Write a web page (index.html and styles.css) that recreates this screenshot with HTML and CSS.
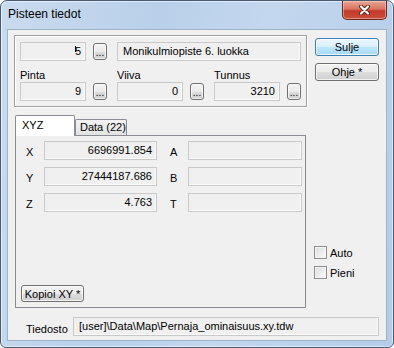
FILE: index.html
```html
<!DOCTYPE html>
<html lang="fi">
<head>
    <meta charset="UTF-8">
    <title>Pisteen tiedot</title>
    <link rel="stylesheet" href="styles.css">
</head>
<body>
<div class="window">
    <div class="titlebar">
        <span class="title">Pisteen tiedot</span>
        <div class="close-btn">
            <svg width="11" height="10" viewBox="0 0 11 10">
                <path d="M2 1.5 L9 8.5 M9 1.5 L2 8.5" stroke="#5b2119" stroke-width="4" stroke-linecap="round"/>
                <path d="M2 1.5 L9 8.5 M9 1.5 L2 8.5" stroke="#fff" stroke-width="2.2" stroke-linecap="round"/>
            </svg>
        </div>
    </div>

    <div class="client">
        <div class="main">
            <div class="left">
                <div class="groupbox">
                    <div class="row-top">
                        <div class="edit num short"><span class="caret"></span>5</div>
                        <button class="dots">...</button>
                        <div class="edit name">Monikulmiopiste 6. luokka</div>
                    </div>
                    <div class="row-fields">
                        <div class="field">
                            <div class="label">Pinta</div>
                            <div class="pair">
                                <div class="edit num short">9</div>
                                <button class="dots">...</button>
                            </div>
                        </div>
                        <div class="field">
                            <div class="label">Viiva</div>
                            <div class="pair">
                                <div class="edit num short">0</div>
                                <button class="dots">...</button>
                            </div>
                        </div>
                        <div class="field">
                            <div class="label">Tunnus</div>
                            <div class="pair">
                                <div class="edit num short">3210</div>
                                <button class="dots">...</button>
                            </div>
                        </div>
                    </div>
                </div>

                <div class="tabs">
                    <div class="tab-strip">
                        <div class="tab active">XYZ</div>
                        <div class="tab">Data (22)</div>
                    </div>
                    <div class="tab-panel">
                        <div class="coord-grid">
                            <div class="clabel">X</div>
                            <div class="edit num">6696991.854</div>
                            <div class="clabel">A</div>
                            <div class="edit"></div>

                            <div class="clabel">Y</div>
                            <div class="edit num">27444187.686</div>
                            <div class="clabel">B</div>
                            <div class="edit"></div>

                            <div class="clabel">Z</div>
                            <div class="edit num">4.763</div>
                            <div class="clabel">T</div>
                            <div class="edit"></div>
                        </div>
                        <button class="btn copy">Kopioi XY *</button>
                    </div>
                </div>
            </div>

            <div class="right">
                <button class="btn default">Sulje</button>
                <button class="btn">Ohje *</button>
                <div class="checks">
                    <label class="check"><span class="box"></span>Auto</label>
                    <label class="check"><span class="box"></span>Pieni</label>
                </div>
            </div>
        </div>

        <div class="file-row">
            <span class="file-label">Tiedosto</span>
            <div class="edit file">[user]\Data\Map\Pernaja_ominaisuus.xy.tdw</div>
        </div>
    </div>
</div>
</body>
</html>
```

FILE: styles.css
```css
* {
    box-sizing: border-box;
}
body {
    margin: 0;
    background: #fff;
    font-family: "Liberation Sans", Arial, sans-serif;
    font-size: 11px;
    color: #000;
}
.window {
    width: 394px;
    height: 348px;
    border: 1px solid #4a5a70;
    border-radius: 7px 7px 6px 6px;
    background: linear-gradient(100deg, #c9dbef 0%, #b9d0ea 35%, #c3d7ee 60%, #b4cce8 100%);
    box-shadow: inset 0 0 0 1px rgba(255,255,255,0.55);
    display: flex;
    flex-direction: column;
    overflow: hidden;
}
.titlebar {
    height: 28px;
    display: flex;
    justify-content: space-between;
    align-items: flex-start;
    padding-left: 7px;
    padding-right: 6px;
}
.title {
    font-size: 12px;
    line-height: 14px;
    margin-top: 6px;
}
.close-btn {
    width: 45px;
    height: 19px;
    border: 1px solid #6e2a22;
    border-top: none;
    border-radius: 0 0 5px 5px;
    background: linear-gradient(#e9a796 0%, #d8745f 45%, #c4392a 55%, #c8503a 100%);
    box-shadow: inset 0 0 0 1px rgba(255,220,210,0.45);
    display: flex;
    justify-content: center;
    align-items: center;
}
.client {
    flex: 1;
    margin: 0 6px 6px;
    border: 1px solid #9fb2c8;
    background: #f0f0f0;
    padding: 5px 7px 0 6px;
    display: flex;
    flex-direction: column;
}
.main {
    display: flex;
    gap: 8px;
    height: 273px;
}
.left {
    width: 293px;
    display: flex;
    flex-direction: column;
}
.groupbox {
    height: 72px;
    border: 1px solid #a0a0a0;
    box-shadow: inset 1px 1px 0 #fff, 1px 1px 0 #fff;
    padding: 6px 5px 0 5px;
    margin-bottom: 8px;
}
.row-top {
    display: flex;
    align-items: center;
    height: 19px;
}
.edit {
    height: 19px;
    border: 1px solid #c9c9c9;
    box-shadow: inset -1px -1px 0 #fbfbfb;
    background: #f0f0f0;
    line-height: 17px;
    padding: 0 4px;
    white-space: nowrap;
    overflow: hidden;
}
.edit.num {
    text-align: right;
}
.edit.short {
    width: 66px;
}
.edit.name {
    width: 184px;
    margin-left: 10px;
    padding-left: 5px;
}
.caret {
    display: inline-block;
    width: 1px;
    height: 6px;
    background: #000;
    vertical-align: 3px;
    margin-right: -1px;
}
.dots {
    width: 14px;
    height: 17px;
    margin-left: 7px;
    padding: 0;
    font-family: inherit;
    font-size: 10px;
    line-height: 17px;
    border: 1px solid #707070;
    border-radius: 3px;
    background: linear-gradient(#f2f2f2 0%, #ebebeb 50%, #dddddd 51%, #cfcfcf 100%);
    box-shadow: inset 0 0 0 1px rgba(255,255,255,0.7);
    color: #000;
}
.row-fields {
    margin-top: 8px;
    display: grid;
    grid-template-columns: 87px 87px 87px;
    column-gap: 10px;
}
.label {
    height: 13px;
    line-height: 13px;
}
.pair {
    display: flex;
    align-items: center;
}
.tabs {
    flex: 1;
    display: flex;
    flex-direction: column;
    padding: 0 1px;
}
.tab-strip {
    display: flex;
    align-items: flex-end;
    height: 20px;
}
.tab {
    height: 16px;
    width: 52px;
    border: 1px solid #898c95;
    border-bottom: none;
    border-radius: 2px 2px 0 0;
    background: linear-gradient(#f2f2f2, #e3e3e3);
    padding-left: 4px;
    line-height: 15px;
}
.tab.active {
    width: 60px;
    height: 21px;
    margin-bottom: -1px;
    background: #fff;
    padding-left: 6px;
    line-height: 19px;
    position: relative;
    z-index: 1;
}
.tab-panel {
    flex: 1;
    border: 1px solid #898c95;
    background: #f0f0f0;
    padding: 5px 3px 5px 10px;
    display: flex;
    flex-direction: column;
}
.coord-grid {
    display: grid;
    grid-template-columns: 18px 113px 18px 114px;
    column-gap: 0;
    row-gap: 7px;
}
.coord-grid .clabel:nth-child(4n+3) {
    margin-left: 13px;
    width: 18px;
}
.coord-grid {
    grid-template-columns: 18px 113px 31px 114px;
}
.clabel {
    line-height: 13px;
    padding-top: 5px;
}
.btn {
    height: 18px;
    padding: 0;
    font-family: inherit;
    font-size: 11px;
    color: #000;
    border: 1px solid #707070;
    border-radius: 3px;
    background: linear-gradient(#f2f2f2 0%, #ebebeb 50%, #dddddd 51%, #cfcfcf 100%);
    box-shadow: inset 0 0 0 1px rgba(255,255,255,0.75);
}
.btn.default {
    border-color: #3c7fb1;
    background: linear-gradient(#eaf6fd 0%, #d9f0fc 50%, #bee6fd 51%, #a7d9f5 100%);
}
.btn.copy {
    width: 63px;
    height: 17px;
    margin-top: auto;
    margin-left: -5px;
    align-self: flex-start;
}
.right {
    width: 64px;
    display: flex;
    flex-direction: column;
    padding-top: 3px;
}
.right .btn + .btn {
    margin-top: 7px;
}
.checks {
    margin-top: auto;
    margin-bottom: 29px;
    display: flex;
    flex-direction: column;
    gap: 7px;
}
.check {
    display: flex;
    align-items: center;
    height: 13px;
    margin-left: -1px;
}
.box {
    width: 13px;
    height: 13px;
    border: 1px solid #8e8f8f;
    background: linear-gradient(135deg, #dcdcdc, #fbfbfb);
    box-shadow: inset 0 0 0 1px #f4f4f4;
    margin-right: 3px;
}
.file-row {
    margin-top: 9px;
    display: flex;
    align-items: flex-end;
    padding-left: 12px;
}
.file-label {
    width: 48px;
    line-height: 13px;
    padding-bottom: 0;
}
.edit.file {
    width: 312px;
    padding-left: 5px;
}
```
